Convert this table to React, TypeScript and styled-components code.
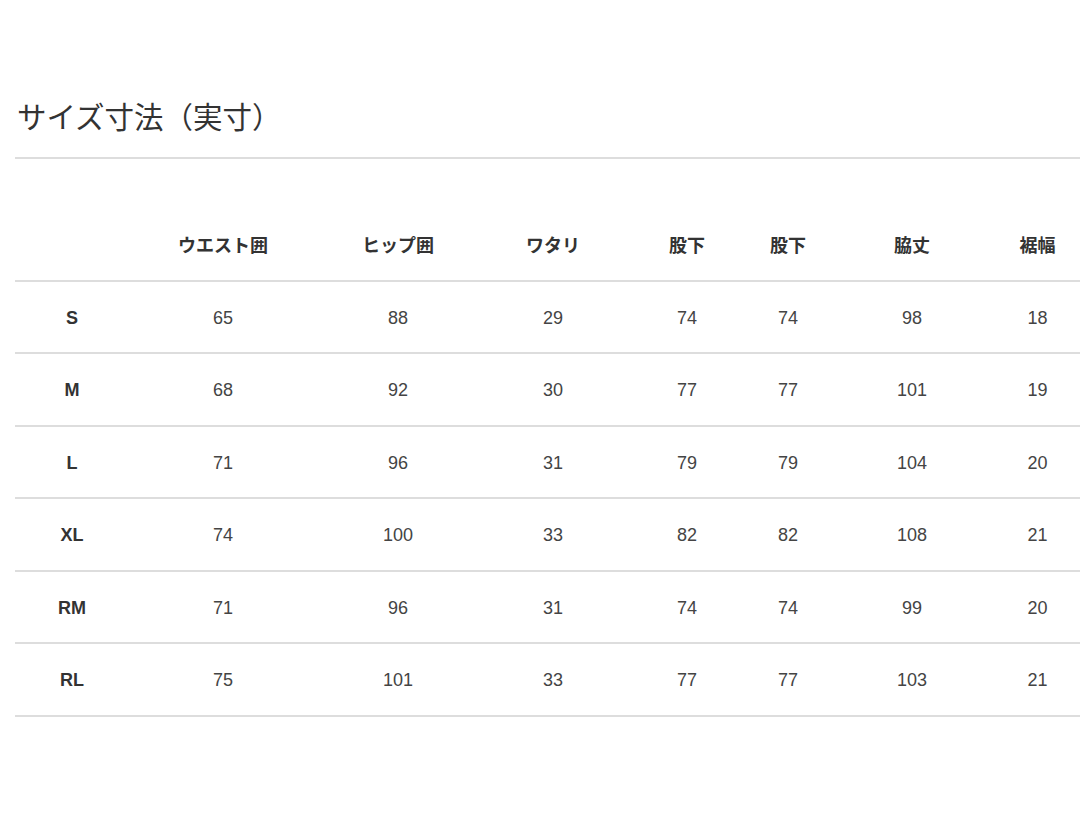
import styled, { createGlobalStyle } from "styled-components";

const GlobalStyle = createGlobalStyle`
  html, body {
    margin: 0;
    padding: 0;
    background: #ffffff;
  }
  body {
    font-family: "Liberation Sans", "Noto Sans CJK JP", sans-serif;
    color: #333333;
    overflow: hidden;
  }
`;

const Page = styled.div`
  padding: 95px 0 0 15px;
  width: 1065px;
`;

const Title = styled.h2`
  margin: 0;
  padding: 0 0 22px 2px;
  border-bottom: 2px solid #dddddd;
  font-family: "Noto Sans CJK JP", "Liberation Sans", sans-serif;
  font-size: 29.5px;
  font-weight: 400;
  line-height: 40px;
  color: #333333;
`;

const SizeTable = styled.table`
  margin-top: 50px;
  width: 1065px;
  border-collapse: collapse;
  table-layout: fixed;
`;

const HeadCell = styled.th`
  height: 70.5px;
  padding: 0;
  border-bottom: 2px solid #dddddd;
  font-family: "Liberation Sans", "Noto Sans CJK JP", sans-serif;
  font-size: 18px;
  font-weight: 700;
  color: #333333;
  text-align: center;
  vertical-align: middle;
`;

const Cell = styled.td<{ $label?: boolean }>`
  box-sizing: border-box;
  height: 72.5px;
  padding: 3px 0 0;
  border-bottom: 2px solid #dddddd;
  font-size: 18px;
  font-weight: ${({ $label }) => ($label ? 700 : 400)};
  color: ${({ $label }) => ($label ? "#333333" : "#444444")};
  text-align: center;
  vertical-align: middle;
`;

const columnWidths = [114, 188, 162, 148, 120, 82, 166, 85];

const headers = ["", "ウエスト囲", "ヒップ囲", "ワタリ", "股下", "股下", "脇丈", "裾幅"];

const rows: [string, ...number[]][] = [
  ["S", 65, 88, 29, 74, 74, 98, 18],
  ["M", 68, 92, 30, 77, 77, 101, 19],
  ["L", 71, 96, 31, 79, 79, 104, 20],
  ["XL", 74, 100, 33, 82, 82, 108, 21],
  ["RM", 71, 96, 31, 74, 74, 99, 20],
  ["RL", 75, 101, 33, 77, 77, 103, 21],
];

export default function App() {
  return (
    <>
      <GlobalStyle />
      <Page>
        <Title>サイズ寸法（実寸）</Title>
        <SizeTable>
          <colgroup>
            {columnWidths.map((w, i) => (
              <col key={i} style={{ width: w }} />
            ))}
          </colgroup>
          <thead>
            <tr>
              {headers.map((h, i) => (
                <HeadCell key={i}>{h}</HeadCell>
              ))}
            </tr>
          </thead>
          <tbody>
            {rows.map(([size, ...values]) => (
              <tr key={size}>
                <Cell $label>{size}</Cell>
                {values.map((v, i) => (
                  <Cell key={i}>{v}</Cell>
                ))}
              </tr>
            ))}
          </tbody>
        </SizeTable>
      </Page>
    </>
  );
}
